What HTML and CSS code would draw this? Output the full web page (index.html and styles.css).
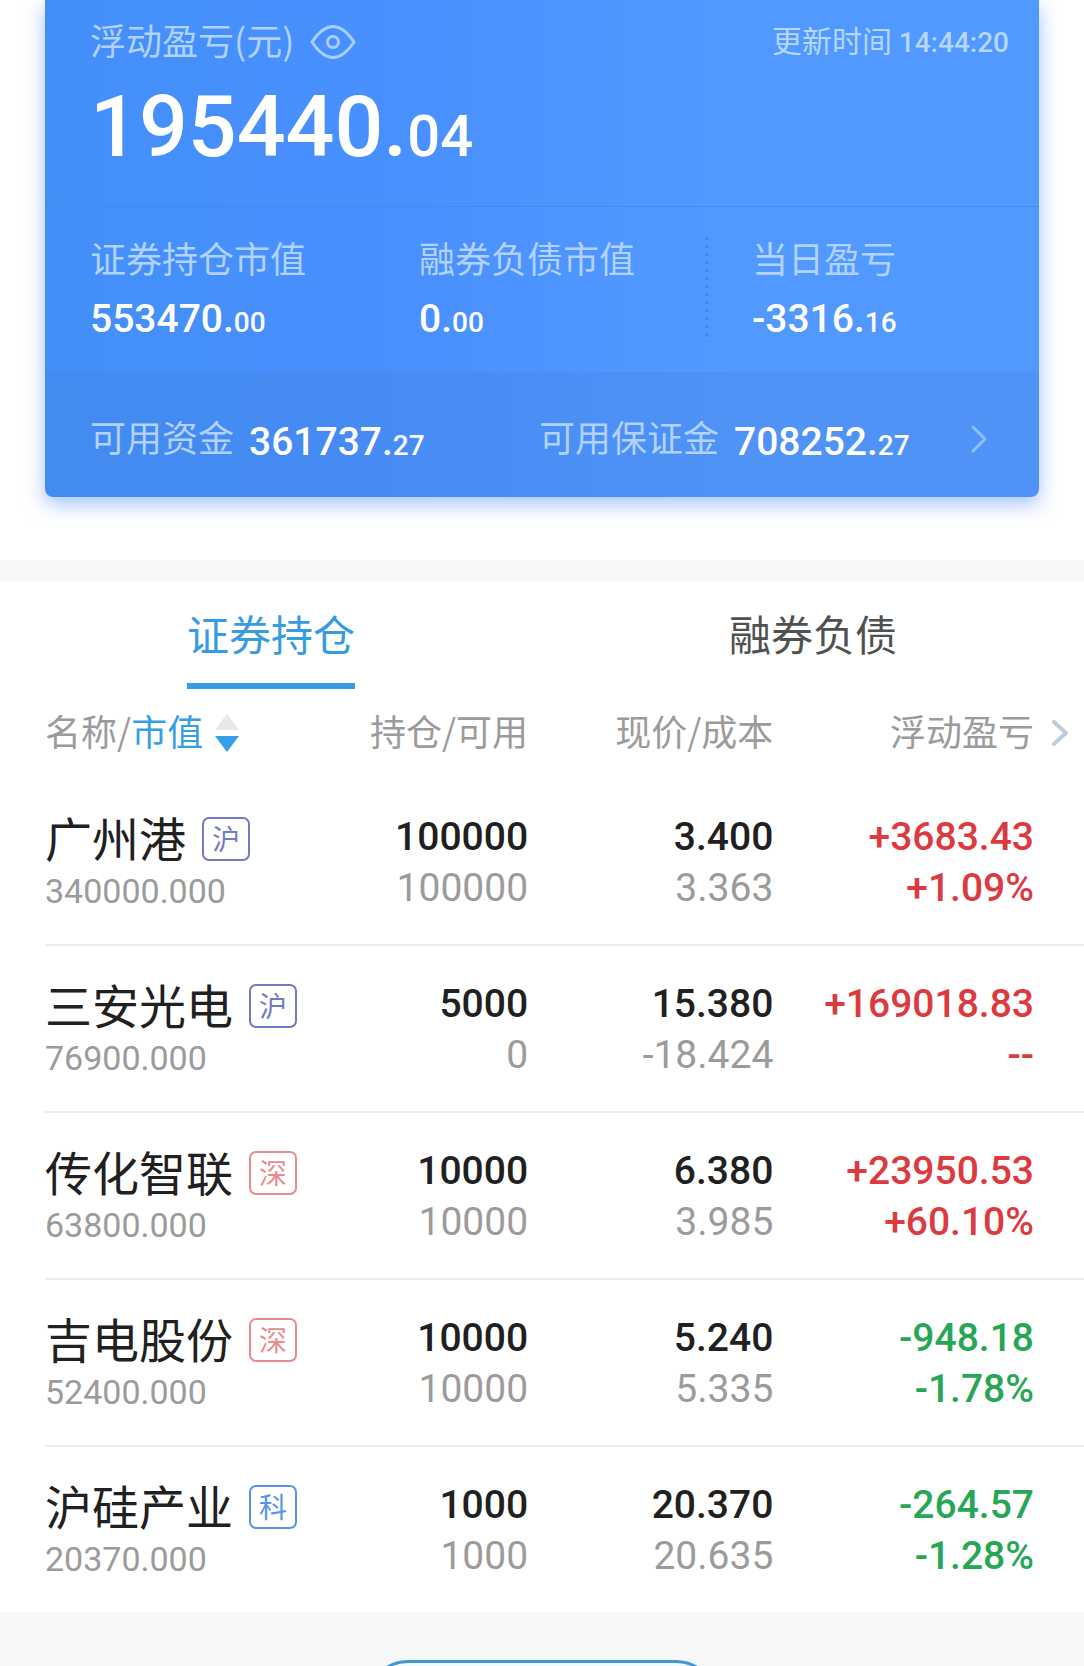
FILE: index.html
```html
<!DOCTYPE html>
<html lang="zh-CN">

<head>
  <meta charset="UTF-8">
  <meta name="viewport" content="width=device-width, initial-scale=1.0">
  <title>证券持仓</title>
  <link rel="stylesheet" href="styles.css">
</head>

<body>
  <header class="summary">
    <section class="card">
      <div class="total">
        <div class="total-head">
          <span class="label">浮动盈亏(元)</span>
          <button class="icon-button eye" aria-label="隐藏金额">
            <svg width="46" height="36" viewBox="0 0 46 36">
              <path d="M2 18C8 9 15 2.500 23 2.500S38 9 44 18C38 27 31 33.500 23 33.500S8 27 2 18Z" />
              <circle cx="23" cy="18" r="5.500" />
            </svg>
          </button>
          <span class="updated">更新时间 <time>14:44:20</time></span>
        </div>
        <div class="amount big">195440.<small>04</small></div>
      </div>
      <div class="stats">
        <div class="stat">
          <div class="label">证券持仓市值</div>
          <div class="amount">553470.<small>00</small></div>
        </div>
        <div class="stat">
          <div class="label">融券负债市值</div>
          <div class="amount">0.<small>00</small></div>
        </div>
        <div class="stat today">
          <div class="label">当日盈亏</div>
          <div class="amount">-3316.<small>16</small></div>
        </div>
      </div>
      <div class="funds">
        <div class="fund">
          <span class="label">可用资金</span>
          <span class="amount">361737.<small>27</small></span>
        </div>
        <div class="fund">
          <span class="label">可用保证金</span>
          <span class="amount">708252.<small>27</small></span>
        </div>
        <button class="icon-button more" aria-label="资金详情">
          <svg width="18" height="30" viewBox="0 0 18 30">
            <path d="M3 3L15 15L3 27" />
          </svg>
        </button>
      </div>
    </section>
  </header>

  <main>
    <nav class="tabs">
      <button class="tab active">证券持仓</button>
      <button class="tab">融券负债</button>
    </nav>
    <table class="holdings">
      <thead>
        <tr>
          <th class="col-name">
            <button class="sort">名称/<span>市值</span>
              <svg width="24" height="40" viewBox="0 0 24 40">
                <path class="up" d="M12 1L24 17H0Z" />
                <path class="down" d="M0 23H24L12 39Z" />
              </svg>
            </button>
          </th>
          <th class="col-qty">持仓/可用</th>
          <th class="col-price">现价/成本</th>
          <th class="col-profit">
            <div class="profit-head">浮动盈亏
              <svg width="16" height="26" viewBox="0 0 16 26">
                <path d="M2 2L14 13L2 24" />
              </svg>
            </div>
          </th>
        </tr>
      </thead>
      <tbody>
        <tr>
          <td>
            <div class="name">广州港 <span class="badge sh">沪</span></div>
            <div class="value">340000.000</div>
          </td>
          <td>100000<div class="sub">100000</div></td>
          <td>3.400<div class="sub">3.363</div></td>
          <td class="rise">+3683.43<div>+1.09%</div></td>
        </tr>
        <tr>
          <td>
            <div class="name">三安光电 <span class="badge sh">沪</span></div>
            <div class="value">76900.000</div>
          </td>
          <td>5000<div class="sub">0</div></td>
          <td>15.380<div class="sub">-18.424</div></td>
          <td class="rise">+169018.83<div>--</div></td>
        </tr>
        <tr>
          <td>
            <div class="name">传化智联 <span class="badge sz">深</span></div>
            <div class="value">63800.000</div>
          </td>
          <td>10000<div class="sub">10000</div></td>
          <td>6.380<div class="sub">3.985</div></td>
          <td class="rise">+23950.53<div>+60.10%</div></td>
        </tr>
        <tr>
          <td>
            <div class="name">吉电股份 <span class="badge sz">深</span></div>
            <div class="value">52400.000</div>
          </td>
          <td>10000<div class="sub">10000</div></td>
          <td>5.240<div class="sub">5.335</div></td>
          <td class="fall">-948.18<div>-1.78%</div></td>
        </tr>
        <tr>
          <td>
            <div class="name">沪硅产业 <span class="badge star">科</span></div>
            <div class="value">20370.000</div>
          </td>
          <td>1000<div class="sub">1000</div></td>
          <td>20.370<div class="sub">20.635</div></td>
          <td class="fall">-264.57<div>-1.28%</div></td>
        </tr>
      </tbody>
    </table>
  </main>

  <footer class="actions">
    <button class="action" aria-label="更多操作"></button>
  </footer>
</body>

</html>
```

FILE: styles.css
```css
* {
  box-sizing: border-box;
}

body {
  display: flex;
  flex-direction: column;
  height: 100vh;
  margin: 0;
  overflow: hidden;
  background: #fff;
  color: #202020;
  font-family: "Noto Sans CJK SC", sans-serif;
  font-size: 36px;
}

button {
  margin: 0;
  padding: 0;
  border: 0;
  background: none;
  color: inherit;
  font: inherit;
}

/* the top margin drops icons to the optical middle of the CJK text */
svg {
  display: block;
  flex: none;
  margin-top: 6px;
  fill: none;
  stroke-linecap: round;
  stroke-linejoin: round;
}

/* account summary */

.summary {
  flex: none;
  padding: 0 45px 63px;
}

.card {
  border-radius: 0 0 8px 8px;
  background: linear-gradient(90deg, #438ff8, #4990ff 35%, #5299ff 70%);
  box-shadow: 0 7px 20px rgba(74, 134, 255, 0.5);
  overflow: hidden;
}

.label {
  color: #b1d1ff;
  line-height: 40px;
}

.amount {
  color: #fff;
  font-family: Roboto, sans-serif;
  font-size: 39px;
  font-weight: 500;
  line-height: 45px;
}

.amount small {
  font-size: 28px;
  line-height: 1;
}

.total {
  padding: 14px 30px 35px 45px;
  border-bottom: 1px solid #448be9;
}

.total-head {
  display: flex;
  align-items: center;
  height: 50px;
}

.icon-button svg {
  stroke: #a9cdff;
  stroke-width: 3;
}

.eye {
  margin-left: 16px;
}

.updated {
  margin-left: auto;
  color: #b4d6ff;
  font-size: 30px;
}

.updated time {
  font-family: Roboto, sans-serif;
  font-size: 28px;
  font-weight: 500;
}

.big {
  margin-top: 19px;
  font-size: 86px;
  line-height: 88px;
}

.big small {
  font-size: 58px;
}

.stats {
  display: grid;
  grid-template-columns: 329fr 286fr 334fr;
  padding: 30px 0 30px 45px;
}

.stat .amount {
  margin-top: 20px;
}

.today {
  padding-left: 47px;
  background: repeating-linear-gradient(#428be8 0 3px, transparent 3px 8px) 0 0 / 3px 100% no-repeat;
}

.funds {
  display: flex;
  align-items: center;
  padding: 40px 51px 37px 45px;
  background: rgba(60, 120, 190, 0.16);
}

.fund {
  display: flex;
  flex: none;
  align-items: flex-end;
  gap: 15px;
}

.fund:first-child {
  width: 50%;
}

.fund .label {
  line-height: 48px;
}

.fund .amount {
  line-height: 36px;
}

.more {
  margin-left: auto;
}

.more svg {
  stroke: #8dbbfc;
}

/* holdings */

main {
  flex: none;
  border-top: 21px solid #f7f7f7;
}

.tabs {
  display: flex;
  justify-content: space-around;
}

.tab {
  padding: 24px 0 22px;
  border-bottom: 6px solid transparent;
  color: #505050;
  font-size: 42px;
  line-height: 56px;
}

.tab.active {
  border-color: #369be0;
  color: #369be0;
}

.holdings {
  width: calc(100% - 45px);
  margin-left: 45px;
  border-spacing: 0;
  table-layout: fixed;
}

th {
  padding: 18px 0 26px;
  color: #9b9b9b;
  font-weight: 400;
  line-height: 40px;
  text-align: right;
  white-space: nowrap;
}

.col-name {
  width: 27%;
  text-align: left;
}

.col-qty {
  width: 19.5%;
}

.col-price {
  width: 23.6%;
}

.sort {
  display: flex;
  align-items: center;
}

.sort span {
  color: #369fe4;
}

.sort svg {
  margin-left: 12px;
}

.up {
  fill: #e5e7ea;
}

.down {
  fill: #369fe8;
}

.profit-head {
  display: flex;
  align-items: center;
  justify-content: flex-end;
  gap: 18px;
  padding-right: 16px;
}

.profit-head svg {
  stroke: #bccddd;
  stroke-width: 4;
}

td {
  padding: 33px 0 30px;
  border-bottom: 2px solid #ececee;
  font-family: Roboto, sans-serif;
  font-size: 39px;
  font-weight: 500;
  line-height: 51px;
  text-align: right;
  vertical-align: top;
}

td:first-child {
  padding: 30px 0;
  text-align: left;
}

td:last-child {
  padding-right: 50px;
}

tbody tr:last-child td {
  border-bottom: 0;
}

.name {
  display: flex;
  align-items: center;
  gap: 16px;
  font-family: "Noto Sans CJK SC", sans-serif;
  font-size: 47px;
  font-weight: 400;
  line-height: 56px;
  white-space: nowrap;
}

.value {
  margin-top: 5px;
  color: #9b9b9b;
  font-size: 34px;
  font-weight: 400;
  line-height: 42px;
}

.sub {
  color: #9b9b9b;
  font-weight: 400;
}

.rise {
  color: #dc3a40;
}

.fall {
  color: #27a655;
}

.badge {
  width: 48px;
  height: 44px;
  margin-top: 4px;
  border: 2px solid;
  border-radius: 7px;
  font-size: 28px;
  line-height: 38px;
  text-align: center;
}

.sh {
  color: #7479c4;
}

.sz {
  color: #e88b91;
}

.star {
  color: #5694e6;
}

/* bottom bar */

.actions {
  flex: 1;
  padding-top: 48px;
  background: #f6f7f9;
  text-align: center;
}

.action {
  width: 352px;
  height: 84px;
  border: 3px solid #4496d2;
  border-radius: 42px;
  background: #effaff;
}
```
